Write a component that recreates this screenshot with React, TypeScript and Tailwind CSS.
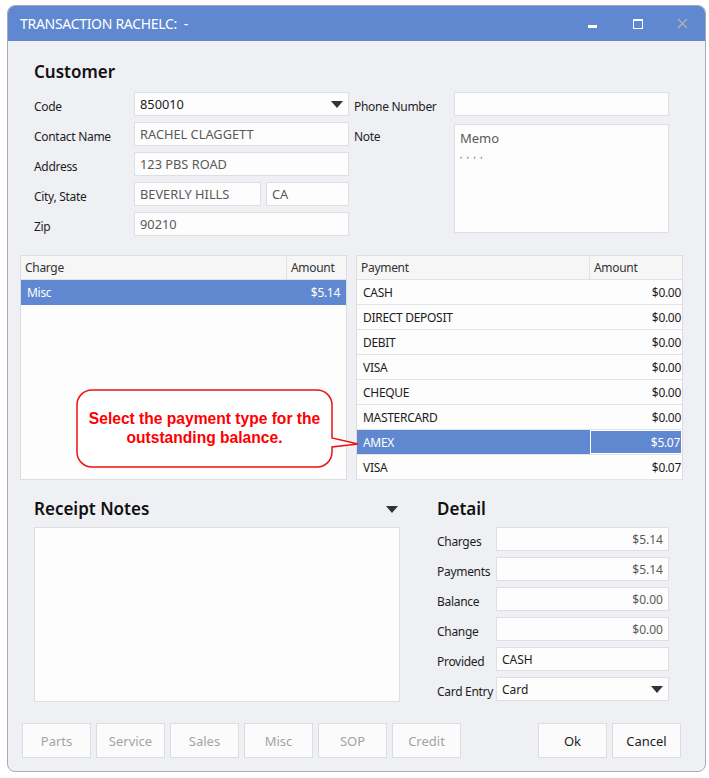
import React from 'react';

const font = { fontFamily: '"Noto Sans", "Open Sans", sans-serif' };

const Arrow: React.FC = () => (
  <svg width="12" height="7" viewBox="0 0 12 7" className="shrink-0">
    <path d="M0 0 H12 L6 7 Z" fill="#333" />
  </svg>
);

const Field: React.FC<{ value?: string; className?: string; dark?: boolean; right?: boolean; arrow?: boolean; upper?: boolean }> = ({
  value,
  className = '',
  dark,
  right,
  arrow,
  upper,
}) => (
  <div
    className={`h-[24px] bg-[#fdfdfd] border border-[#dedfe3] flex items-center px-[5px] ${
      upper ? 'text-[12.8px]' : 'text-[12px]'
    } ${dark ? 'text-[#1c1c1c]' : 'text-[#5a5a5a]'} ${right ? 'justify-end' : 'justify-between'} ${className}`}
  >
    <span className="pt-[1px]">{value}</span>
    {arrow && <Arrow />}
  </div>
);

const Label: React.FC<{ text: string; w: string }> = ({ text, w }) => (
  <div
    className={`${w} h-[24px] pt-[5px] flex items-center text-[12px] tracking-[-0.3px] whitespace-nowrap text-[#1e1e1e] shrink-0`}
  >
    {text}
  </div>
);

const payments = [
  ['CASH', '$0.00'],
  ['DIRECT DEPOSIT', '$0.00'],
  ['DEBIT', '$0.00'],
  ['VISA', '$0.00'],
  ['CHEQUE', '$0.00'],
  ['MASTERCARD', '$0.00'],
  ['AMEX', '$5.07'],
  ['VISA', '$0.07'],
];

const details = [
  ['Charges', '$5.14'],
  ['Payments', '$5.14'],
  ['Balance', '$0.00'],
  ['Change', '$0.00'],
];

const App: React.FC = () => {
  return (
    <div className="w-[709px] h-[778px] bg-white pt-[5px] pl-[7px] overflow-hidden" style={font}>
      <div className="relative w-[699px] h-[767px] rounded-[8px] border border-[#a3aab8] bg-[#eff0f4] overflow-hidden flex flex-col">
        {/* title bar */}
        <div className="h-[35px] bg-[#6088d0] flex items-center shrink-0">
          <span className="pl-[12px] text-[14px] text-white tracking-[-0.3px]">TRANSACTION RACHELC:&nbsp; -</span>
          <div className="ml-auto flex h-full">
            <div className="w-[45px] flex items-center justify-center pt-[5px]">
              <div className="w-[9px] h-[3px] bg-white" />
            </div>
            <div className="w-[45px] flex items-center justify-center">
              <div className="w-[10px] h-[10px] border border-white border-t-2" />
            </div>
            <div className="w-[45px] flex items-center justify-center">
              <svg width="11" height="11" viewBox="0 0 11 11">
                <path d="M1 1 L10 10 M10 1 L1 10" stroke="#a9adb8" strokeWidth="1.6" />
              </svg>
            </div>
          </div>
        </div>

        {/* customer */}
        <div className="pl-[26px] pt-[19px]">
          <div className="h-[24px] text-[17px] font-semibold text-[#111] leading-[24px]">Customer</div>
          <div className="flex mt-[8px]">
            <div className="flex flex-col gap-[6px]">
              <div className="flex">
                <Label text="Code" w="w-[100px]" />
                <Field value="850010" dark arrow upper className="w-[215px]" />
              </div>
              <div className="flex">
                <Label text="Contact Name" w="w-[100px]" />
                <Field value="RACHEL CLAGGETT" upper className="w-[215px]" />
              </div>
              <div className="flex">
                <Label text="Address" w="w-[100px]" />
                <Field value="123 PBS ROAD" upper className="w-[215px]" />
              </div>
              <div className="flex">
                <Label text="City, State" w="w-[100px]" />
                <Field value="BEVERLY HILLS" upper className="w-[127px]" />
                <Field value="CA" upper className="w-[83px] ml-[5px]" />
              </div>
              <div className="flex">
                <Label text="Zip" w="w-[100px]" />
                <Field value="90210" upper className="w-[215px]" />
              </div>
            </div>
            <div className="flex flex-col ml-[5px]">
              <div className="flex">
                <Label text="Phone Number" w="w-[100px]" />
                <Field className="w-[215px]" />
              </div>
              <div className="flex mt-[8px]">
                <div className="w-[100px] pt-[4px] text-[12px] tracking-[-0.3px] text-[#1e1e1e]">Note</div>
                <div className="w-[215px] h-[109px] bg-[#fdfdfd] border border-[#dedfe3] px-[5px] pt-[3px] text-[13px] text-[#5a5a5a] leading-[20px]">
                  <div>Memo</div>
                  <div className="text-[9px] leading-[12px] tracking-[1px] mt-[1px]">, , , ,</div>
                </div>
              </div>
            </div>
          </div>
        </div>

        {/* tables */}
        <div className="flex gap-[9px] pl-[12px] mt-[19px] text-[12px] tracking-[-0.3px]">
          <div className="w-[327px] h-[225px] bg-[#fdfdfd] border border-[#dcdde1]">
            <div className="h-[24px] flex bg-[#f6f6f7] border-b border-[#e0e1e4] text-[#333] pt-[1px]">
              <div className="flex-1 pl-[4px] flex items-center">Charge</div>
              <div className="w-[60px] border-l border-[#e0e1e4] pl-[4px] flex items-center">Amount</div>
            </div>
            <div className="h-[25px] flex items-center justify-between bg-[#6088d0] text-white px-[6px] pt-[1px]">
              <span>Misc</span>
              <span>$5.14</span>
            </div>
          </div>
          <div className="w-[327px] h-[225px] bg-[#fdfdfd] border border-[#dcdde1]">
            <div className="h-[24px] flex bg-[#f6f6f7] border-b border-[#e0e1e4] text-[#333] pt-[1px]">
              <div className="flex-1 pl-[4px] flex items-center">Payment</div>
              <div className="w-[93px] border-l border-[#e0e1e4] pl-[4px] flex items-center">Amount</div>
            </div>
            {payments.map(([name, amt], i) => {
              const sel = name === 'AMEX';
              return (
                <div
                  key={i}
                  className={`h-[25px] flex border-b border-[#e2e3e6] ${sel ? 'bg-[#6088d0] text-white' : 'text-[#1c1c1c]'}`}
                >
                  <div className="flex-1 pl-[6px] pt-[1px] flex items-center">{name}</div>
                  <div
                    className={`w-[92px] flex items-center justify-end pr-[1px] pt-[1px] ${sel ? 'border border-white' : ''}`}
                  >
                    {amt}
                  </div>
                </div>
              );
            })}
          </div>
        </div>

        {/* receipt notes / detail */}
        <div className="flex pl-[26px] mt-[17px]">
          <div className="w-[366px]">
            <div className="h-[24px] flex items-center justify-between pr-[2px]">
              <span className="text-[17px] font-semibold text-[#111]">Receipt Notes</span>
              <Arrow />
            </div>
            <div className="mt-[6px] h-[175px] bg-[#fdfdfd] border border-[#dedfe3]" />
          </div>
          <div className="ml-[37px]">
            <div className="h-[24px] flex items-center text-[17px] font-semibold text-[#111]">Detail</div>
            <div className="mt-[6px] flex flex-col gap-[6px]">
              {details.map(([l, v]) => (
                <div key={l} className="flex">
                  <Label text={l} w="w-[59px]" />
                  <Field value={v} right className="w-[173px]" />
                </div>
              ))}
              <div className="flex">
                <Label text="Provided" w="w-[59px]" />
                <Field value="CASH" dark className="w-[173px]" />
              </div>
              <div className="flex">
                <Label text="Card Entry" w="w-[59px]" />
                <Field value="Card" dark arrow className="w-[173px]" />
              </div>
            </div>
          </div>
        </div>

        {/* buttons */}
        <div className="flex pl-[14px] pr-[24px] mt-[21px] text-[13px]">
          <div className="flex gap-[5px]">
            {['Parts', 'Service', 'Sales', 'Misc', 'SOP', 'Credit'].map((b) => (
              <div
                key={b}
                className="w-[69px] h-[35px] bg-[#fbfbfc] border border-[#dcdde1] flex items-center justify-center pt-[2px] text-[#a3a3a8]"
              >
                {b}
              </div>
            ))}
          </div>
          <div className="ml-auto flex gap-[5px]">
            {['Ok', 'Cancel'].map((b) => (
              <div
                key={b}
                className="w-[69px] h-[35px] bg-[#fbfbfc] border border-[#dcdde1] flex items-center justify-center pt-[2px] text-[#1c1c1c]"
              >
                {b}
              </div>
            ))}
          </div>
        </div>

        {/* callout */}
        <svg className="absolute left-[62px] top-[379px]" width="292" height="87" viewBox="0 0 292 87">
          <path
            d="M22 5 H247 A15 15 0 0 1 262 20 V53 L288 59 L262 62 V67 A15 15 0 0 1 247 82 H22 A15 15 0 0 1 7 67 V20 A15 15 0 0 1 22 5 Z"
            fill="white"
            stroke="#ee1111"
            strokeWidth="1.5"
          />
        </svg>
        <div
          className="absolute left-[69px] top-[384px] w-[255px] h-[77px] flex flex-col items-center justify-center text-[15.6px] font-bold text-[#ff0000] leading-[19px] pb-[2px]"
          style={{ fontFamily: '"Liberation Sans", Arial, sans-serif' }}
        >
          <div>Select the payment type for the</div>
          <div>outstanding balance.</div>
        </div>
      </div>
    </div>
  );
};

export default App;
